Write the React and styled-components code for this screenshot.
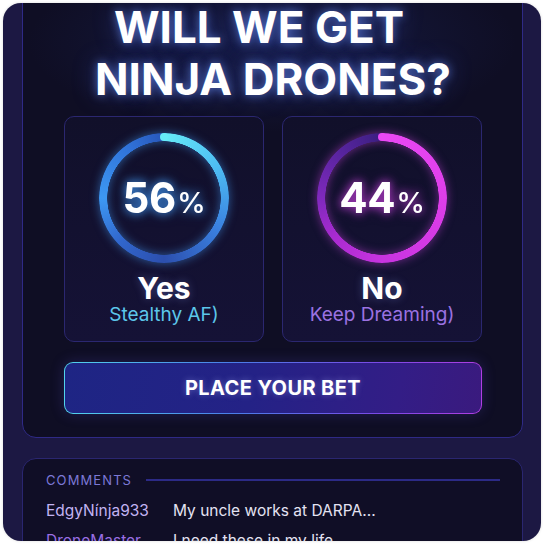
import React from 'react';
import styled, { createGlobalStyle } from 'styled-components';

const GlobalStyle = createGlobalStyle`
    html, body {
        margin: 0;
        padding: 0;
        background: #ffffff;
    }
    body {
        font-family: Inter, "Noto Sans", "Liberation Sans", sans-serif;
        -webkit-font-smoothing: antialiased;
    }
`;

const options = [
    {
        pct: 56,
        label: 'Yes',
        note: 'Stealthy AF)',
        noteColor: '#5cc6ea',
        glow: 'rgba(70, 160, 255, 0.55)',
        ring: 'conic-gradient(from 0deg, #66ecf8 0deg, #4dbcf2 60deg, #3a80e0 120deg, #2c4fae 180deg, #3166cc 225deg, #3d98f3 270deg, #3176dc 320deg, #2858bc 358deg)',
        cap: '#66ecf8',
    },
    {
        pct: 44,
        label: 'No',
        note: 'Keep Dreaming)',
        noteColor: '#9b72e2',
        glow: 'rgba(220, 70, 240, 0.5)',
        ring: 'conic-gradient(from 0deg, #ea48f4 0deg, #de3ee9 90deg, #c834e0 180deg, #a92bd0 230deg, #7f29bd 270deg, #56249d 320deg, #3d1f82 358deg)',
        cap: '#ea48f4',
    },
];

const comments = [
    { user: 'EdgyNínja933', text: 'My uncle works at DARPA...', color: '#c2b3f2' },
    { user: 'DroneMaster', text: 'I need these in my life', color: '#9a6ee4' },
];

export default function App() {
    return (
        <>
            <GlobalStyle />
            <Frame>
                <Column>
                    <PollPanel>
                        <Title>
                            <TitleLine $trail={28}>WILL WE GET</TitleLine>
                            <TitleLine $trail={0}>NINJA DRONES?</TitleLine>
                        </Title>
                        <Options>
                            {options.map((o) => (
                                <OptionCard key={o.label}>
                                    <Ring $ring={o.ring} $glow={o.glow}>
                                        <RingCap $color={o.cap} />
                                        <Percent $glow={o.glow}>
                                            {o.pct}
                                            <small>%</small>
                                        </Percent>
                                    </Ring>
                                    <OptionLabel>{o.label}</OptionLabel>
                                    <OptionNote $color={o.noteColor}>{o.note}</OptionNote>
                                </OptionCard>
                            ))}
                        </Options>
                        <BetButton>PLACE YOUR BET</BetButton>
                    </PollPanel>
                    <CommentsPanel>
                        <CommentsHeader>
                            <span>COMMENTS</span>
                            <Rule />
                        </CommentsHeader>
                        <CommentList>
                            {comments.map((c) => (
                                <CommentRow key={c.user}>
                                    <User $color={c.color}>{c.user}</User>
                                    <Message>{c.text}</Message>
                                </CommentRow>
                            ))}
                        </CommentList>
                    </CommentsPanel>
                </Column>
            </Frame>
        </>
    );
}

const Frame = styled.div`
    width: 538px;
    height: 538px;
    margin: 3px;
    box-sizing: border-box;
    padding: 0 18px 0 19px;
    border-radius: 18px;
    background: #1c1843;
    overflow: hidden;
    box-shadow: 0 0 3px rgba(0, 0, 0, 0.15);
`;

const Column = styled.div`
    display: flex;
    flex-direction: column;
    gap: 20px;
`;

const PollPanel = styled.section`
    /* panel is scrolled: its top edge sits above the frame */
    margin-top: -26px;
    padding: 23px 40px 23px 41px;
    display: flex;
    flex-direction: column;
    border: 1px solid #2f2a86;
    border-radius: 14px;
    background:
        radial-gradient(ellipse 70% 28% at 50% 14%, rgba(40, 60, 150, 0.28), transparent 70%),
        #0f0e24;
`;

const Title = styled.h1`
    margin: 0;
    display: flex;
    flex-direction: column;
    align-items: center;
    font-size: 44px;
    line-height: 52px;
    font-weight: 700;
    color: #ffffff;
    text-shadow: 0 0 10px rgba(110, 150, 255, 0.65), 0 0 24px rgba(70, 100, 230, 0.45);
`;

const TitleLine = styled.span`
    padding-right: ${(p) => p.$trail}px;
`;

const Options = styled.div`
    margin-top: 11px;
    display: grid;
    grid-template-columns: 1fr 1fr;
    gap: 18px;
`;

const OptionCard = styled.div`
    height: 226px;
    box-sizing: border-box;
    padding-top: 16px;
    display: flex;
    flex-direction: column;
    align-items: center;
    border: 1px solid #2b2770;
    border-radius: 10px;
    background: linear-gradient(180deg, #11102a 0%, #151236 100%);
`;

const Ring = styled.div`
    position: relative;
    width: 130px;
    height: 130px;
    flex: none;
    display: flex;
    align-items: center;
    justify-content: center;
    filter: drop-shadow(0 0 5px ${(p) => p.$glow});

    &::before {
        content: '';
        position: absolute;
        inset: 0;
        border-radius: 50%;
        background: ${(p) => p.$ring};
        -webkit-mask: radial-gradient(farthest-side, transparent calc(100% - 8.5px), #000 calc(100% - 8px));
        mask: radial-gradient(farthest-side, transparent calc(100% - 8.5px), #000 calc(100% - 8px));
    }
`;

const RingCap = styled.span`
    position: absolute;
    top: 0;
    left: 61px;
    width: 8px;
    height: 8px;
    border-radius: 50%;
    background: ${(p) => p.$color};
`;

const Percent = styled.div`
    position: relative;
    font-size: 42px;
    font-weight: 700;
    color: #ffffff;
    line-height: 1;
    letter-spacing: -0.3px;
    text-shadow: 0 0 10px ${(p) => p.$glow};

    small {
        font-size: 29px;
        font-weight: 500;
        margin-left: 1px;
    }
`;

const OptionLabel = styled.div`
    margin-top: 9px;
    font-size: 30px;
    line-height: 32px;
    font-weight: 700;
    color: #ffffff;
    text-shadow: 0 0 8px rgba(140, 160, 255, 0.35);
`;

const OptionNote = styled.div`
    font-size: 19px;
    line-height: 20px;
    margin-top: 1px;
    color: ${(p) => p.$color};
`;

const BetButton = styled.button`
    margin-top: 20px;
    height: 52px;
    border: 1.5px solid transparent;
    border-radius: 9px;
    font-family: inherit;
    font-size: 20px;
    font-weight: 700;
    color: #ffffff;
    letter-spacing: 0.4px;
    cursor: pointer;
    background:
        linear-gradient(100deg, #1e2584 0%, #242286 45%, #331d86 80%, #3a1a7e 100%) padding-box,
        linear-gradient(90deg, #52d4ec 0%, #4a7ee8 40%, #7a4ae6 75%, #b03ee2 100%) border-box;
    box-shadow: 0 0 14px rgba(90, 80, 220, 0.25);
    text-shadow: 0 0 6px rgba(180, 190, 255, 0.4);
`;

const CommentsPanel = styled.section`
    padding: 13px 22px 20px 23px;
    border: 1px solid #2a2670;
    border-radius: 14px;
    background: #100e26;
`;

const CommentsHeader = styled.div`
    display: flex;
    align-items: center;
    gap: 14px;
    font-size: 13px;
    line-height: 16px;
    letter-spacing: 1.1px;
    color: #7c78d6;
`;

const Rule = styled.div`
    flex: 1;
    height: 2px;
    background: #2c2a86;
`;

const CommentList = styled.div`
    margin-top: 13px;
    display: flex;
    flex-direction: column;
    gap: 10px;
`;

const CommentRow = styled.div`
    display: flex;
    font-size: 15.5px;
    line-height: 20px;
`;

const User = styled.span`
    width: 127px;
    flex: none;
    color: ${(p) => p.$color};
`;

const Message = styled.span`
    color: #e4e2f2;
`;
